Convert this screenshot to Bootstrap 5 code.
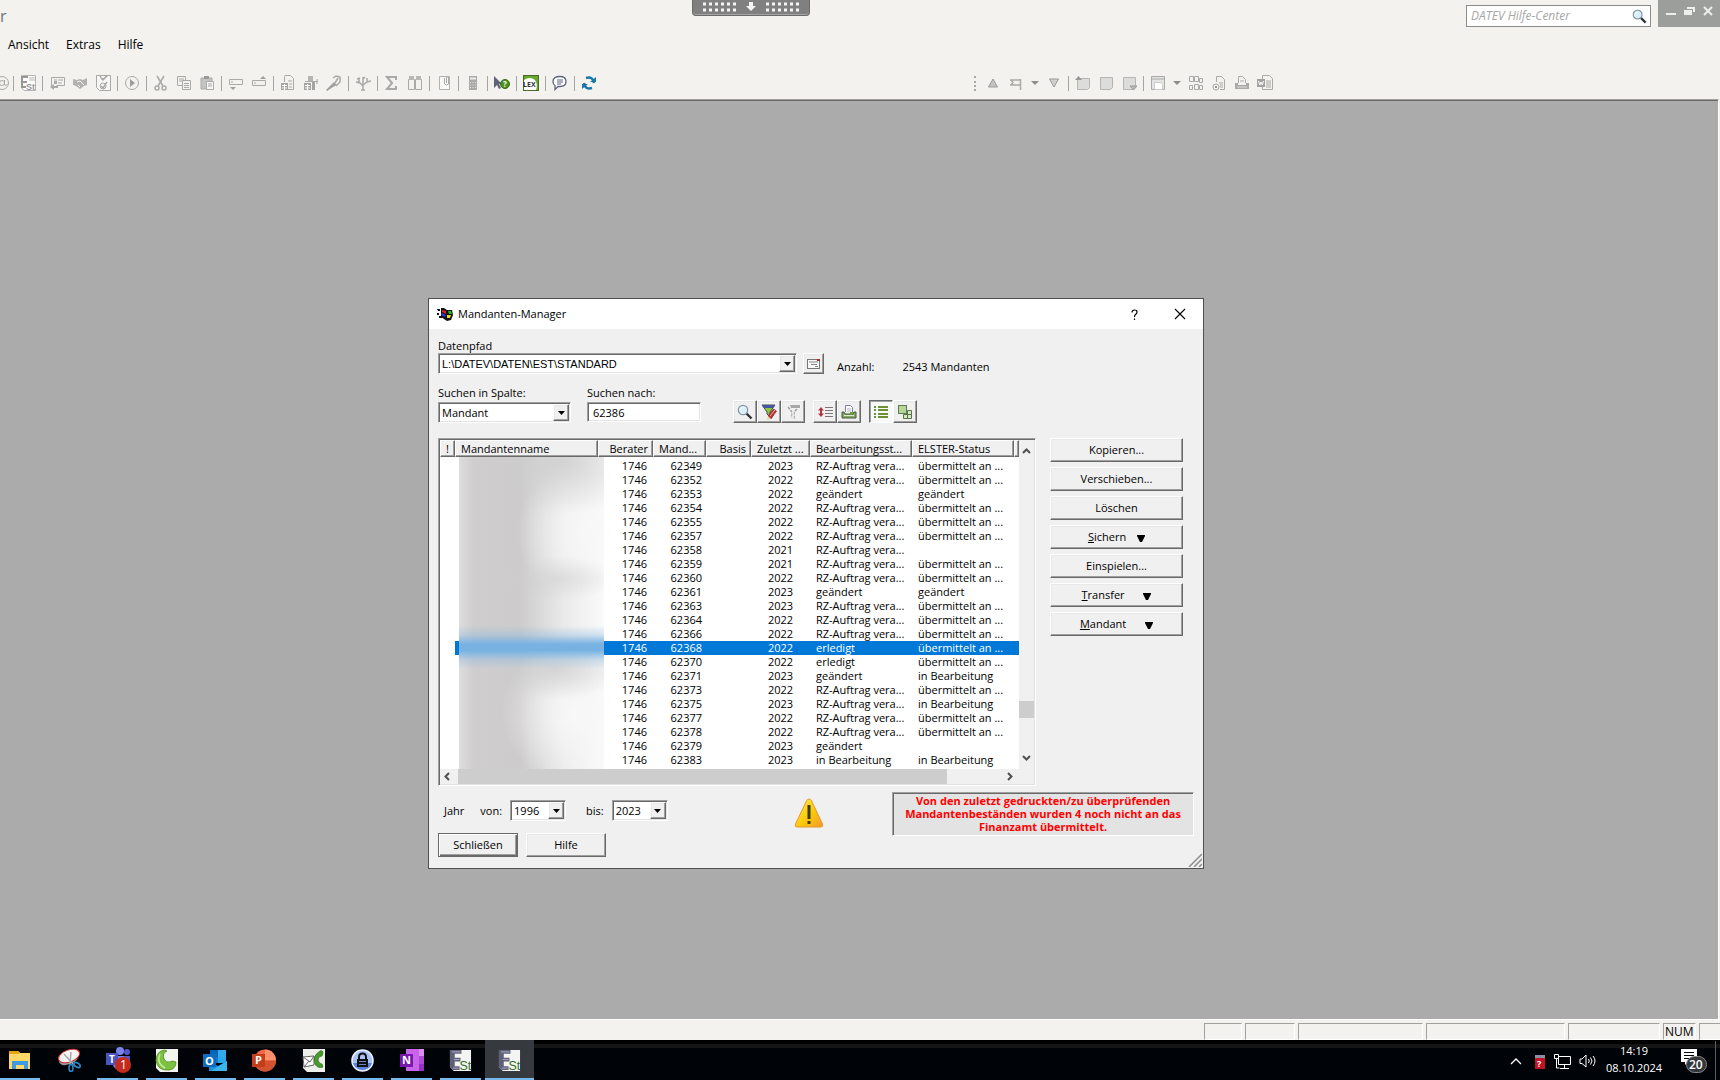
<!DOCTYPE html>
<html lang="de">
<head>
  <meta charset="UTF-8" />
  <meta name="viewport" content="width=device-width, initial-scale=1" />
  <title>Mandanten-Manager</title>
  <!-- Bootstrap CSS -->
  <link
    href="https://cdn.jsdelivr.net/npm/bootstrap@5.3.0/dist/css/bootstrap.min.css"
    rel="stylesheet"
  />
  <style>
    body {
      font-family: "Open Sans", "Noto Sans", sans-serif;
      font-size: 11px;
      line-height: 14px;
      color: #000;
      background: #f3f2ee;
    }
    svg { display: block; flex: none; }

    /* Kopfbereich */
    .titlerow { height: 27px; }
    .apptitle { font-size: 16px; line-height: 20px; color: #6c7480; padding-top: 6px; }
    .helpsearch {
      width: 185px;
      height: 22px;
      margin: 5px 7px 0 0;
      border: 1px solid #8c8c8c;
      background: #fff;
      padding: 0 3px 0 4px;
    }
    .helpsearch input { font-size: 12px; font-style: italic; min-width: 0; background: none; }
    .helpsearch input::placeholder { color: #a6a6a6; opacity: 1; }
    .plainbtn { border: 0; background: none; padding: 0; color: inherit; }
    .mdibtns { width: 62px; background: #9c9e9c; padding: 6px 7px 0 8px; }
    .menurow { height: 36px; padding-left: 8px; }
    .menurow a { color: #000; font-size: 12px; line-height: 16px; text-decoration: none; margin-right: 17px; }
    .toolrow { height: 36px; padding-top: 4px; }
    .tool { width: 23px; height: 20px; border: 0; padding: 0; background: none; display: flex; align-items: center; justify-content: center; flex: none; }
    .tool.cut { width: 10px; justify-content: flex-end; }
    .tool.narrow { width: 15px; }
    .toolsep { width: 6px; flex: none; }
    .toolsep::before { content: ""; display: block; width: 1px; height: 15px; margin-left: 3px; background: #a5a5a3; }
    .tools2 { margin-left: 371px; }
    .grip { border-left: 2px dotted #a8a8a8; height: 15px; margin: 0 5px 0 3px; }
    .sessionbar { left: 692px; top: 0; width: 118px; height: 16px; background: #808080; border: 1px solid #6b6b6b; border-top: 0; border-radius: 0 0 4px 4px; box-shadow: inset 0 -1px #a5a5a5; }

    /* Arbeitsbereich */
    .workarea { background: #ababab; border-top: 1px solid #a0a0a0; border-right: 1px solid #fff; margin-right: 1px; box-shadow: inset 0 1px #696969; }
    .statusrow { height: 21px; border-top: 1px solid #fff; padding-top: 3px; gap: 3px; }
    .pane { border: 1px solid #fff; border-top-color: #a0a0a0; border-left-color: #a0a0a0; font-size: 12px; line-height: 16px; padding-left: 1px; }

    /* Dialog */
    .dialogwin { left: 428px; top: 198px; width: 776px; background: #f0f0f0; border: 1px solid #505050; }
    .dialogtitle { height: 30px; background: #fff; padding: 0 17px 0 8px; }
    .dialogtitle span { padding-left: 5px; }
    .helpbtn { margin-right: 36px; }
    .dialogbody { padding: 10px 9px 11px 9px; }
    .raised, .raised:hover, .raised:active {
      border: 1px solid;
      border-color: #fff #696969 #696969 #fff;
      box-shadow: inset -1px -1px #a0a0a0, inset 1px 1px #e8e8e8;
      background: #f0f0f0;
      border-radius: 0;
      color: #000;
      font-size: 11px;
      line-height: 14px;
      padding: 0;
    }
    .sunken {
      border: 1px solid;
      border-color: #a0a0a0 #fff #fff #a0a0a0;
      box-shadow: inset 1px 1px #696969, inset -1px -1px #e3e3e3;
      background: #fff;
    }
    .combo { position: relative; height: 21px; }
    .combo select { appearance: none; width: 100%; height: 100%; border: 0; background: none; padding: 0 20px 0 3px; color: #000; }
    .combo .arrow { position: absolute; right: 1px; top: 1px; bottom: 1px; width: 16px; pointer-events: none; display: flex; align-items: center; justify-content: center; }
    .pathbox { width: 359px; font-family: "Liberation Sans", Arial, sans-serif; }
    .colbox { width: 133px; }
    .yearbox { width: 56px; }
    .searchbox { width: 114px; height: 20px; margin-bottom: 1px; padding: 0 5px; color: #000; }
    .fieldrow { margin-top: 12px; }
    .fieldrow label { margin-bottom: 2px; }
    .iconbtn { width: 24px; height: 23px; display: flex; align-items: center; justify-content: center; }
    .pathbtn { width: 21px; height: 21px; margin-left: 6px; }
    .countinfo { padding-left: 13px; gap: 28px; }
    .iconbtn.pressed { border-color: #696969 #fff #fff #696969; box-shadow: inset 1px 1px #a0a0a0; background: #f8f8f8; }
    .listrow { margin-top: 15px; gap: 14px; }
    .listbox { flex: 1; min-width: 0; padding: 1px; height: 348px; }
    .clients { table-layout: fixed; width: 100%; border-collapse: separate; border-spacing: 0; }
    .clients th {
      height: 17px;
      font-weight: 400;
      background: #f0f0f0;
      border: solid;
      border-width: 1px;
      border-color: #fff #696969 #696969 #fff;
      box-shadow: inset -1px -1px #a0a0a0;
      padding: 0 4px 0 5px;
      white-space: nowrap;
      overflow: hidden;
    }
    .clients td { height: 14px; line-height: 14px; padding: 0 6px; white-space: nowrap; overflow: hidden; }
    .clients td:nth-child(4) { padding-right: 4px; }
    .clients tbody::before { content: ""; display: block; height: 2px; }
    .clients tr.selected td:not(:first-child) { background: #0078d7; color: #fff; }
    .namemask {
      left: 19px;
      top: 17px;
      width: 145px;
      bottom: 0;
      background:
        linear-gradient(180deg, transparent 54%, rgba(130, 182, 225, .35) 57%, #78b2e2 60%, #78b2e2 62%, rgba(130, 182, 225, .35) 65%, transparent 68%),
        radial-gradient(ellipse 90px 50px at 70% 2%, rgba(205, 205, 205, .8), transparent),
        radial-gradient(ellipse 60px 22px at 68% 39%, rgba(208, 208, 208, .6), transparent),
        radial-gradient(ellipse 70px 30px at 66% 68%, rgba(206, 206, 206, .8), transparent),
        radial-gradient(ellipse 70px 70px at 88% 24%, rgba(248, 248, 248, .9), transparent),
        radial-gradient(ellipse 74px 70px at 80% 82%, rgba(248, 248, 248, 1), transparent),
        linear-gradient(90deg, #dedddd 0, #cfcdce 10%, #cdcbcc 42%, #eaeaea 72%, #fafafa 100%);
    }
    .vbar { width: 15px; flex: none; background: #f0f0f0; }
    .hbar { height: 15px; flex: none; background: #f0f0f0; }
    .hbar .right { margin-right: 21px; }
    .thumb { background: #cdcdcd; }
    .sidebtns { width: 133px; gap: 5px; margin-right: 11px; }
    .sidebtns .btn { height: 24px; }
    .bottomrow { margin-top: 6px; }
    .yearrow { padding-left: 6px; }
    .warnsign { padding: 6px 0 0 34px; }
    .msgbox { width: 302px; height: 44px; background: #e3e3e3; color: #f00; font-weight: 700; line-height: 13px; padding: 1px 8px; text-align: center; }
    .dlgbtn { width: 80px; height: 24px; }
    .dlgbtn.default { border-color: #696969; box-shadow: inset 1px 1px #fff, inset -1px -1px #696969, inset -2px -2px #a0a0a0; }
    .sizegrip { right: 1px; bottom: 1px; }

    /* Taskleiste */
    .taskbar { height: 40px; background: #000308; border-top: 4px solid #000; box-shadow: inset 0 4px #151515; color: #fff; }
    .tasks { margin-left: -5px; }
    .task { width: 49px; height: 40px; margin-top: -4px; border: 0; background: none; position: relative; display: flex; align-items: center; justify-content: center; padding: 0; }
    .task.open::after { content: ""; position: absolute; left: 4px; right: 4px; bottom: 0; height: 2px; background: #76b9ed; }
    .task.active { background: #363a3f; }
    .task.active::after { left: 0; right: 0; }
    .tray { height: 34px; }
    .clock { width: 66px; line-height: 17px; text-align: center; margin: 0 13px 4px 5px; }
    .peek { border-left: 1px solid #5a5c60; width: 5px; height: 40px; margin-left: 8px; }
  </style>
</head>
<body>
  <!-- gemeinsame Symbole -->
  <svg class="d-none">
    <symbol id="tri" viewBox="0 0 7 4"><path d="M0 0h7L3.500 4z" fill="currentColor" /></symbol>
    <symbol id="lens" viewBox="0 0 16 16">
      <path d="M9.500 9.500l5 5" stroke="#333" stroke-width="2.400" />
      <circle cx="6" cy="6" r="4.700" fill="#d9effa" stroke="#8395a0" stroke-width="1.200" />
      <path d="M3.500 6a3 3 0 0 1 2.500-2.600" stroke="#fff" stroke-width="1.200" fill="none" />
    </symbol>
    <symbol id="est" viewBox="0 0 24 24">
      <path d="M1 1h22v22H5l-4-4z" fill="#f4f4f2" />
      <path d="M1 1h12v4H6v4h6v4H6v5h5v4H4l-3-3z" fill="#5d6078" />
      <path d="M3 3h9M5 11h6M4 20h6" stroke="#a9acc0" />
      <text x="11" y="22" font-family="Liberation Sans" font-size="13" fill="#2f6b2c">St</text>
    </symbol>
  </svg>

  <div class="vh-100 d-flex flex-column overflow-hidden position-relative">
    <header>
      <div class="titlerow d-flex">
        <div class="apptitle me-auto">r</div>
        <div class="helpsearch d-flex align-items-center">
          <input class="form-control border-0 rounded-0 shadow-none p-0" type="text" placeholder="DATEV Hilfe-Center" aria-label="DATEV Hilfe-Center" />
          <button class="plainbtn" type="button" aria-label="Suchen"><svg width="15" height="15"><use href="#lens" /></svg></button>
        </div>
        <div class="mdibtns d-flex justify-content-between align-items-start text-white">
          <button class="plainbtn" type="button" aria-label="Minimieren"><svg width="10" height="10"><path d="M0 8h10" stroke="#eee" stroke-width="2" /></svg></button>
          <button class="plainbtn" type="button" aria-label="Wiederherstellen"><svg width="11" height="10"><path d="M3 1h8v5H9V3H3z" fill="#eee" /><path d="M0 4h8v5H0z" fill="#eee" /></svg></button>
          <button class="plainbtn" type="button" aria-label="Schließen"><svg width="10" height="10"><path d="M1 1l8 8M9 1L1 9" stroke="#eee" stroke-width="2" /></svg></button>
        </div>
      </div>
      <nav class="menurow d-flex align-items-center">
        <a href="#">Ansicht</a>
        <a href="#">Extras</a>
        <a href="#">Hilfe</a>
      </nav>
      <div class="toolrow d-flex align-items-center" id="toolrow"></div>
    </header>

    <div class="sessionbar position-absolute d-flex justify-content-center">
      <svg width="98" height="12">
        <g stroke="#f4f4f4" stroke-width="3" stroke-dasharray="3 3">
          <path d="M1 4h33M1 10h33M64 4h33M64 10h33" />
        </g>
        <path d="M47 2h4v4h3l-5 5-5-5h3z" fill="#f4f4f4" />
      </svg>
    </div>

    <main class="workarea flex-grow-1 position-relative">
      <section class="dialogwin position-absolute">
        <div class="dialogtitle d-flex align-items-center">
          <svg width="16" height="14" viewBox="0 0 16 14">
            <path d="M0 2h3v2H1zM0 6h2v2H0zM2 9h3v2H2zM4 1h3l3 2 5 0 1 5-2 5-4 1-6-4z" fill="#111" />
            <path d="M5 3l4 1v3L5 5z" fill="#e02020" /><path d="M11 4h3l1 3h-3z" fill="#24b324" />
            <path d="M5 6l4 2-1 2-4-2z" fill="#2838e0" /><path d="M10 8h4l-1 3h-3z" fill="#f0d820" />
          </svg>
          <span class="me-auto">Mandanten-Manager</span>
          <button class="plainbtn helpbtn" type="button" aria-label="Hilfe"><svg width="7" height="11"><path d="M1 3.500Q1 1 3.500 1T6 3Q6 4.500 4.500 5.500 3.500 6.200 3.500 8M3.500 9.500V11" fill="none" stroke="#000" stroke-width="1.200" /></svg></button>
          <button class="plainbtn" type="button" aria-label="Schließen"><svg width="12" height="12"><path d="M1 1l10 10M11 1L1 11" stroke="#000" stroke-width="1.100" /></svg></button>
        </div>

        <div class="dialogbody">
          <div class="d-flex align-items-end">
            <div>
              <label class="d-block" for="path">Datenpfad</label>
              <div class="combo sunken pathbox">
                <select id="path"><option>L:\DATEV\DATEN\EST\STANDARD</option></select>
                <span class="arrow raised"><svg width="7" height="4"><use href="#tri" /></svg></span>
              </div>
            </div>
            <button class="btn raised iconbtn pathbtn" type="button" aria-label="Pfad wählen">
              <svg width="14" height="12"><rect x=".5" y="1.500" width="12" height="9" fill="#f8f8f8" stroke="#777" /><path d="M2 4h9M4 6.500h6M8 8.500h3" stroke="#888" /><path d="M10 1h3v2h-3z" fill="#b22" /></svg>
            </button>
            <div class="countinfo d-flex">
              <span>Anzahl:</span>
              <span>2543 Mandanten</span>
            </div>
          </div>

          <div class="fieldrow d-flex align-items-end">
            <div>
              <label class="d-block" for="column">Suchen in Spalte:</label>
              <div class="combo sunken colbox">
                <select id="column"><option>Mandant</option></select>
                <span class="arrow raised"><svg width="7" height="4"><use href="#tri" /></svg></span>
              </div>
            </div>
            <div class="ms-3 me-4">
              <label class="d-block" for="term">Suchen nach:</label>
              <input class="sunken searchbox d-block" id="term" type="text" value="62386" />
            </div>
            <div class="d-flex ms-2">
              <button class="btn raised iconbtn" type="button" aria-label="Suchen"><svg width="16" height="16"><use href="#lens" /></svg></button>
              <button class="btn raised iconbtn" type="button" aria-label="Filter bearbeiten">
                <svg width="16" height="16"><path d="M1 1h13L9 8v5l-3-3V8z" fill="#8ec63f" stroke="#44544a" /><path d="M1 1h13l-2 3H3z" fill="#4456a0" /><path d="M7 12l5.500-7 3 2-5.500 8z" fill="#c03038" stroke="#7a1a20" stroke-width=".6" /><path d="M9 12l5-6" stroke="#f0a8a8" /><path d="M7 12l-1 4 4-1z" fill="#e8d8a0" /></svg>
              </button>
              <button class="btn raised iconbtn" type="button" aria-label="Filter aufheben">
                <svg width="16" height="16"><path d="M5 1h10v3H6z" fill="#a8a8a8" /><path d="M3 3l4 5v6M12 5L9 8v7" stroke="#a0a0a0" stroke-width="1.500" stroke-dasharray="3 1" fill="none" /><path d="M8 7v8" stroke="#fff" /></svg>
              </button>
            </div>
            <div class="d-flex ms-2">
              <button class="btn raised iconbtn" type="button" aria-label="Sortieren">
                <svg width="16" height="14"><path d="M4 3v8" stroke="#b03840" stroke-width="2" /><path d="M1 5.500L4 2l3 3.500zM1 8.500L4 12l3-3.500z" fill="#b03840" /><path d="M8 2.500h8M8 5.500h8M8 8.500h8M8 11.500h8" stroke="#777" /></svg>
              </button>
              <button class="btn raised iconbtn" type="button" aria-label="Drucken">
                <svg width="16" height="16"><path d="M4.500 8V1.500h5l2 2V8" fill="#fff" stroke="#7a83a0" /><path d="M6 5h4M6 7h4" stroke="#a9b0c4" /><path d="M1 8h2l1 2h8l1-2h2v6H1z" fill="#86a868" stroke="#44583a" /><path d="M3 11.500h10" stroke="#dcebc8" /><path d="M9 9h3" stroke="#6a2" stroke-width="2" /></svg>
              </button>
            </div>
            <div class="d-flex ms-2">
              <button class="btn raised iconbtn pressed" type="button" aria-label="Liste">
                <svg width="16" height="14"><path d="M1 2h2M1 5h2M1 9h2M1 12h2M5 2h10M5 5h10M5 9h10M5 12h10" stroke="#6f8f35" stroke-width="1.800" /></svg>
              </button>
              <button class="btn raised iconbtn" type="button" aria-label="Symbole">
                <svg width="16" height="16"><rect x="1.500" y="1.500" width="8" height="8" fill="#b6d69a" stroke="#5f7d50" /><path d="M10.500 6.500h4v4h-4zM6.500 10.500h4v4h-4zM10.500 10.500h4v4h-4z" fill="#d5e8c4" stroke="#587548" /></svg>
              </button>
            </div>
          </div>

          <div class="listrow d-flex">
            <div class="listbox sunken d-flex flex-column">
              <div class="d-flex flex-grow-1 overflow-hidden">
                <div class="flex-grow-1 position-relative overflow-hidden">
                  <table class="clients">
                    <colgroup>
                      <col style="width: 15px" /><col style="width: 143px" /><col style="width: 55px" />
                      <col style="width: 53px" /><col style="width: 45px" /><col style="width: 59px" />
                      <col style="width: 102px" /><col style="width: 102px" /><col />
                    </colgroup>
                    <thead>
                      <tr>
                        <th>!</th>
                        <th>Mandantenname</th>
                        <th class="text-end">Berater</th>
                        <th>Mand...</th>
                        <th class="text-end">Basis</th>
                        <th>Zuletzt ...</th>
                        <th>Bearbeitungsst...</th>
                        <th>ELSTER-Status</th>
                        <th class="px-0"></th>
                      </tr>
                    </thead>
                    <tbody id="rows"></tbody>
                  </table>
                  <div class="namemask position-absolute"></div>
                </div>
                <div class="vbar d-flex flex-column align-items-center py-1">
                  <svg class="mt-1" width="9" height="6"><path d="M1 5l3.500-3.500L8 5" fill="none" stroke="#505050" stroke-width="2" /></svg>
                  <div class="flex-grow-1"></div>
                  <div class="thumb w-100" style="height: 17px"></div>
                  <div style="height: 37px"></div>
                  <svg class="mb-1" width="9" height="6"><path d="M1 1l3.500 3.500L8 1" fill="none" stroke="#505050" stroke-width="2" /></svg>
                </div>
              </div>
              <div class="hbar d-flex align-items-center">
                <svg class="ms-1 me-2" width="6" height="9"><path d="M5 1L1.500 4.500 5 8" fill="none" stroke="#505050" stroke-width="2" /></svg>
                <div class="thumb h-100" style="width: 489px"></div>
                <svg class="right ms-auto" width="6" height="9"><path d="M1 1l3.500 3.500L1 8" fill="none" stroke="#505050" stroke-width="2" /></svg>
              </div>
            </div>
            <div class="sidebtns d-flex flex-column">
              <button class="btn raised" type="button">Kopieren...</button>
              <button class="btn raised" type="button">Verschieben...</button>
              <button class="btn raised" type="button">Löschen</button>
              <button class="btn raised" type="button"><u>S</u>ichern <svg class="d-inline ms-2" width="8" height="7"><path d="M0 0h8v1L5 7H3L0 1z" /></svg></button>
              <button class="btn raised" type="button">Einspielen...</button>
              <button class="btn raised" type="button"><u>T</u>ransfer <svg class="d-inline ms-3" width="8" height="7"><path d="M0 0h8v1L5 7H3L0 1z" /></svg></button>
              <button class="btn raised" type="button"><u>M</u>andant <svg class="d-inline ms-3" width="8" height="7"><path d="M0 0h8v1L5 7H3L0 1z" /></svg></button>
            </div>
          </div>

          <div class="bottomrow d-flex">
            <div class="pt-2">
              <div class="yearrow d-flex align-items-center">
                <span class="me-3">Jahr</span>
                <label class="me-1 pe-1" for="from">von:</label>
                <div class="combo sunken yearbox">
                  <select id="from"><option>1996</option></select>
                  <span class="arrow raised"><svg width="7" height="4"><use href="#tri" /></svg></span>
                </div>
                <label class="ms-3 me-2 ps-1" for="to">bis:</label>
                <div class="combo sunken yearbox">
                  <select id="to"><option>2023</option></select>
                  <span class="arrow raised"><svg width="7" height="4"><use href="#tri" /></svg></span>
                </div>
              </div>
              <div class="d-flex gap-2 mt-2 pt-1">
                <button class="btn raised dlgbtn default" type="button">Schließen</button>
                <button class="btn raised dlgbtn" type="button">Hilfe</button>
              </div>
            </div>
            <div class="warnsign flex-grow-1 d-flex justify-content-center">
              <svg class="ms-4" width="30" height="30" viewBox="0 0 30 30">
                <defs><linearGradient id="warn" x2="1" y2="1"><stop offset="0" stop-color="#fff04a" /><stop offset=".55" stop-color="#fbc90c" /><stop offset="1" stop-color="#f09a2c" /></linearGradient></defs>
                <path d="M15 1q1.500 0 2.300 1.500L28.500 26q.8 3-1.500 3H3q-2.300 0-1.500-3L12.700 2.500Q13.500 1 15 1z" fill="url(#warn)" stroke="#e8962a" />
                <path d="M13.500 7h3v14h-3zM13.500 23h3v3h-3z" fill="#3f3a16" />
              </svg>
            </div>
            <div class="msgbox sunken">Von den zuletzt gedruckten/zu überprüfenden Mandantenbeständen wurden 4 noch nicht an das Finanzamt übermittelt.</div>
          </div>
        </div>
        <svg class="sizegrip position-absolute" width="14" height="14"><path d="M1 14L14 1M6 14l8-8M11 14l3-3" stroke="#8c8c8c" stroke-width="1.500" /></svg>
      </section>
    </main>

    <div class="statusrow d-flex justify-content-end">
      <div class="pane" style="width: 38px"></div>
      <div class="pane" style="width: 50px"></div>
      <div class="pane" style="width: 125px"></div>
      <div class="pane" style="width: 139px"></div>
      <div class="pane" style="width: 92px"></div>
      <div class="pane" style="width: 33px">NUM</div>
      <div class="pane border-end-0" style="width: 21px"></div>
    </div>

    <footer class="taskbar d-flex">
      <div class="tasks d-flex">
        <button class="task open" type="button" aria-label="Explorer">
          <svg width="22" height="22" viewBox="0 0 22 22"><path d="M0 2h9l2 2h10v16H0z" fill="#ffd766" /><path d="M0 2h9l2 2-2 1H0z" fill="#e5a50f" /><path d="M3 20v-8h16v8h-4v-4H7v4z" fill="#3f9be0" /></svg>
        </button>
        <button class="task" type="button" aria-label="Snipping Tool">
          <svg width="24" height="24" viewBox="0 0 24 24"><path d="M2 14Q2 5 13 2q9-2 9 3 0 8-9 11-9 3-11-2z" fill="#999" /><ellipse cx="12" cy="8" rx="11" ry="6" transform="rotate(-20 12 8)" fill="#f7f4f4" stroke="#d03030" /><path d="M7 6l11 12M14 4l-1 12" stroke="#a8a8b0" stroke-width="1.500" /><ellipse cx="14" cy="20" rx="2" ry="3.500" fill="none" stroke="#2b87c8" stroke-width="1.600" /><ellipse cx="20" cy="17" rx="3.500" ry="2" transform="rotate(30 20 17)" fill="none" stroke="#2b87c8" stroke-width="1.600" /></svg>
        </button>
        <button class="task open" type="button" aria-label="Teams">
          <svg width="26" height="26" viewBox="0 0 26 26"><circle cx="15" cy="4" r="4" fill="#7b83eb" /><circle cx="22" cy="5" r="3" fill="#5059c9" /><path d="M8 9h13v9q-2 6-7 5-5-1-6-5z" fill="#7b83eb" /><path d="M19 9h6v8h-6z" fill="#5059c9" /><rect x="1" y="6" width="12" height="12" fill="#4b53bc" /><text x="4" y="16" font-family="Open Sans" font-size="10" font-weight="700" fill="#fff">T</text><circle cx="18" cy="18" r="8" fill="#c42b1c" /><text x="15" y="22" font-family="Open Sans" font-size="12" fill="#fff">1</text></svg>
        </button>
        <button class="task open" type="button" aria-label="Telefonie">
          <svg width="23" height="23" viewBox="0 0 23 23"><path d="M1 0h22v23H5l-4-4z" fill="#f3f3ef" /><path d="M6 2q4-2 6 0-5 2-3 8 2 4 6 3 1-2 6 0 0 7-7 8Q3 22 1 12 1 5 6 2z" fill="#7cc142" stroke="#4b8a1c" stroke-width=".8" /><path d="M5 5q-4 9 5 14" stroke="#c5eb9b" fill="none" stroke-width="1.500" /></svg>
        </button>
        <button class="task open" type="button" aria-label="Outlook">
          <svg width="25" height="23" viewBox="0 0 25 23"><path d="M7 1h16v13H7z" fill="#28a8ea" /><path d="M7 1h8v7H7z" fill="#0364b8" /><path d="M15 1h8v7h-8z" fill="#32a9e8" /><path d="M7 8h8v6H7z" fill="#0f78d4" /><path d="M6 12l9 5 9-5v10H6z" fill="#1a8fe0" /><path d="M24 12v10H8z" fill="#50d0f5" opacity=".6" /><rect y="5" width="13" height="13" fill="#0f6cbd" /><text x="2" y="16" font-family="Open Sans" font-size="11" font-weight="700" fill="#fff">O</text></svg>
        </button>
        <button class="task open" type="button" aria-label="PowerPoint">
          <svg width="25" height="23" viewBox="0 0 25 23"><circle cx="13" cy="11.500" r="11" fill="#ed6c47" /><path d="M13 .5a11 11 0 0 1 11 11H13z" fill="#ff8f6b" /><path d="M3 16a11 11 0 0 0 21-4.500H13z" fill="#d35230" /><rect y="5" width="13" height="13" fill="#c43e1c" /><text x="3" y="15" font-family="Open Sans" font-size="11" font-weight="700" fill="#fff">P</text></svg>
        </button>
        <button class="task open" type="button" aria-label="Kontakte">
          <svg width="23" height="23" viewBox="0 0 23 23"><path d="M1 0h22v23H5l-4-4z" fill="#eeeeea" /><path d="M1 8l11-1v9L2 18z" fill="#fff" stroke="#666" /><path d="M1 8l7 5 4-6M2 18l5-6" stroke="#666" fill="none" /><path d="M18 2q2-1 3 1l-1 4q-4 0-4 4 1 4 4 4l1 3q-5 2-8-3-3-8 5-13z" fill="#459c2c" stroke="#2d6b1c" stroke-width=".7" /></svg>
        </button>
        <button class="task open" type="button" aria-label="Passwörter">
          <svg width="23" height="23" viewBox="0 0 23 23"><circle cx="11.500" cy="11.500" r="10.500" fill="#a9c1f5" stroke="#e6eeff" stroke-width="1.600" /><path d="M2 14a10 10 0 0 0 19 0z" fill="#5f83dc" /><path d="M8 11V8q0-3.500 3.500-3.500T15 8v3" fill="none" stroke="#111" stroke-width="2" /><rect x="6" y="10" width="11" height="8" fill="#111" /><path d="M8 12.500h7M8 15.500h7" stroke="#6d86c0" /></svg>
        </button>
        <button class="task open" type="button" aria-label="OneNote">
          <svg width="24" height="22" viewBox="0 0 24 22"><rect x="6" width="18" height="22" fill="#ca64ea" /><path d="M19 0h5v7h-5z" fill="#e08cf5" /><path d="M19 7h5v8h-5z" fill="#ae4bd5" /><path d="M19 15h5v7h-5z" fill="#9332bf" /><rect y="5" width="13" height="13" fill="#7719aa" /><text x="2" y="15" font-family="Open Sans" font-size="11" font-weight="700" fill="#fff">N</text></svg>
        </button>
        <button class="task open" type="button" aria-label="Einkommensteuer"><svg width="23" height="23"><use href="#est" /></svg></button>
        <button class="task open active" type="button" aria-label="Mandanten-Manager"><svg width="23" height="23"><use href="#est" /></svg></button>
      </div>

      <div class="tray d-flex align-items-center ms-auto">
        <svg class="me-2" width="12" height="7"><path d="M1 6l5-5 5 5" fill="none" stroke="#fff" stroke-width="1.300" /></svg>
        <svg class="ms-1 me-2" width="12" height="15"><path d="M1 1h10v4H1z" fill="#8c90a4" /><path d="M1 4h10v11H1z" fill="#c41224" /><text x="3" y="13" font-family="Open Sans" font-size="9" font-weight="700" fill="#fff">?</text></svg>
        <svg width="17" height="15" class="me-2"><path d="M4.500 2.500h12v8h-12zM10.500 11v3M6 14.500h9M2.500 5v9h3" fill="none" stroke="#fff" /><path d="M.5 .5h4v4h-4z" fill="#000308" stroke="#fff" /></svg>
        <svg width="17" height="14"><path d="M1 5h2l4-4v12L3 9.500H1z" fill="none" stroke="#fff" /><path d="M9.500 5q1.500 2 0 4M11.500 3.500q3 3.500 0 7M14 2q4 5 0 10" fill="none" stroke="#fff" /></svg>
        <div class="clock"><div>14:19</div><div>08.10.2024</div></div>
        <svg width="27" height="26" viewBox="0 0 27 26"><path d="M1 1h16v13H8l-3 3v-3H1z" fill="#fff" /><path d="M4 4.500h10M4 7.500h10M4 10.500h6" stroke="#000308" /><rect x="6.500" y="8.500" width="20" height="16" rx="8" fill="#33363c" stroke="#8a8a8a" /><text x="9" y="21" font-family="Open Sans" font-size="12" font-weight="600" fill="#fff">20</text></svg>
        <div class="peek"></div>
      </div>
    </footer>
  </div>

  <!-- JavaScript -->
  <script>
    // Symbolleiste: "|" = Trennstrich, sonst [Titel, SVG-Inhalt]
    const g = 'fill="none" stroke="#a9a9a7"';
    const tools = [
      ["E-Mail", `<g ${g}><circle cx="8" cy="8" r="6.500"/><circle cx="8" cy="8" r="2.500"/><path d="M10.500 5v5q2 1 3-1"/></g>`],
      "|",
      ["ESt", `<path d="M1.500 .5h14v15H4l-2.500-3z" fill="#fff" stroke="#b5b5b3"/><path d="M8 2H2v10h4M2 7h5" fill="none" stroke="#979795" stroke-width="2"/><path d="M9 3h6M9 5h6" stroke="#b5b5b3"/><text x="6" y="15" font-family="Liberation Sans" font-size="9" font-weight="700" fill="#979795">St</text>`],
      "|",
      ["Bescheid", `<g ${g}><path d="M2.500 12V2.500h13v8h-8"/><path d="M5 5h3M9 5h5M9 8h4"/></g><path d="M5 6h3v3H5zM1 12l4-3v2h4v2H5v2z" fill="#aaa"/>`],
      ["Partner", `<path d="M1 4l4 1 3-1 3 1 4-2v7l-3 1-4 3-4-3-3-1z" fill="#b2b2b0"/><path d="M5 7l3-1 4 4M6 10l2 2" stroke="#f3f2ee" fill="none"/>`],
      ["Prüfen", `<path d="M1.500 .5h14v15h-11l-3-3z" fill="#f8f8f6" stroke="#a9a9a7"/><circle cx="8" cy="11" r="3" ${g}/><path d="M5 1q3 6 6 0M6 3l2 2 5-5M6 11l2 2 4-6" ${g} stroke-width="1.500"/>`],
      "|",
      ["Start", `<circle cx="8" cy="8" r="6.500" ${g}/><path d="M6 4l5 4-5 4z" fill="#9d9d9b"/>`],
      "|",
      ["Ausschneiden", `<g ${g} stroke-width="1.500"><path d="M4 1l6 10M11 1L5 11"/><circle cx="4" cy="13" r="2"/><circle cx="11" cy="13" r="2"/></g>`],
      ["Kopieren", `<g ${g}><path d="M1.500 1.500h8v9h-8zM3 4h5M3 6h5" /><path d="M6.500 5.500h8v9h-8z" fill="#f3f2ee"/><path d="M8 8.500h5M8 10.500h5M8 12.500h5"/></g>`],
      ["Einfügen", `<path d="M2 3h11v11H2z" fill="#c4c4c2" stroke="#a9a9a7"/><path d="M5 1h5v3H5z" fill="#999"/><path d="M7.500 6.500h7v8h-7z" fill="#f6f6f4" stroke="#aaa"/><path d="M9 9h4M9 11h4" ${g}/>`],
      "|",
      ["Zeile einfügen", `<path d="M1.500 4.500h13v5h-13zM4 6v2" ${g}/><path d="M2 12h6l-3 3z" fill="#a0a09e"/>`],
      ["Zeile löschen", `<path d="M1.500 5.500h13v5h-13zM4 7v2" ${g}/><path d="M9 4h6l-3-3z" fill="#a0a09e"/>`],
      "|",
      ["Rechnen", `<path d="M4.500 .5h6l3 3v11h-6M4.500 1.500V7M8 6h4M9 9h3M9 12h3" ${g}/><path d="M1 8h7v7H1z" fill="#a3a3a1"/><path d="M2 10.500h5M2 13h5M4.500 9v6" stroke="#fff"/>`],
      ["Vergleich", `<path d="M5 1h5v5H5z" fill="#b5b5b3"/><path d="M1 8h7v7H1zM9 7h3v8H9z" fill="#a3a3a1"/><path d="M2 10.500h5M2 13h5M4.500 9v6" stroke="#fff"/><path d="M2 6.500h13M14 4v5" ${g}/>`],
      ["Assistent", `<path d="M0 15l8-8 3 3-4 2-6 4z" fill="#a0a09e"/><path d="M7 3l3-2 4 1v5l-4 4M9 8l3-5" ${g} stroke-width="1.500"/>`],
      "|",
      ["Baum", `<path d="M8 15V8M6 15h4M8 11L3 6M8 10l5-4M5 8L1 7M4 7V3M8 8V2M12 6V3M12 7l4-1M5 3L2 4M10 2L8 4" ${g} stroke-width="1.500"/>`],
      "|",
      ["Summe", `<path d="M12 5V2H3l5 6-5 6h9v-3" ${g} stroke-width="2"/>`],
      ["Bücher", `<path d="M1.500 4.500h6v10h-6zM8.500 4.500h6v10h-6z" fill="#f3f2ee" stroke="#a9a9a7"/><path d="M2 1h5v4H2zM9 1h5v4H9z" fill="#b8b8b6"/>`],
      "|",
      ["Anlage", `<path d="M3.500 1.500h10v13h-10z" fill="#fafaf8" stroke="#b2b2b0"/><path d="M8.500 3v6q2 2 4 0V2h-2v6" ${g}/>`],
      "|",
      ["Taschenrechner", `<path d="M4 1h8v14H4z" fill="#a9a9a7"/><path d="M5 3.500h6" stroke="#eee" stroke-width="2"/><path d="M5 7.500h6M5 10h6M5 12.500h6" stroke="#e4e4e2" stroke-dasharray="1 1.500"/>`],
      "|",
      ["Direkthilfe", `<path d="M0 1v12l3-3 2 4 2-1-2-4h3z" fill="#5e6378"/><circle cx="11" cy="9" r="4.500" fill="#4f8f1e" stroke="#3b6b1a"/><text x="9" y="12" font-size="8" font-weight="700" fill="#fff">?</text>`],
      "|",
      ["LEX", `<rect x=".5" y=".5" width="15" height="15" fill="#6aa82a" stroke="#496a2a"/><path d="M1 5q6-4 11 0 3 5 1 10H1z" fill="#fff"/><text x="0" y="12" font-size="7" font-weight="700" fill="#333">LEX</text>`],
      "|",
      ["Feedback", `<path d="M8 1.500q6 0 6 5t-6 5H6l-3 3v-4q-2-1-2-4 0-5 7-5z" fill="#fff" stroke="#5c6280" stroke-width="1.300"/><path d="M5 5h6M5 7h6M5 9h4" stroke="#5c6280"/>`],
      "|",
      ["Aktualisieren", `<path d="M5 3q7-2 8 5M11 13Q4 15 3 8" fill="none" stroke="#1878a8" stroke-width="2.500"/><path d="M9 7h6V2zM7 9H1v5z" fill="#1878a8"/>`]
    ];

    const tools2 = [
      ["Zurück", `<path d="M8 4l4.500 8h-9z" fill="#c4c4c2" stroke="#999"/>`],
      ["Marke", `<path d="M2 5h11M12.500 4v11M2 10h11M3 5l2 2.500L3 10" ${g} stroke-width="1.500"/>`],
      ["", `<path d="M4 6h8l-4 4z" fill="#8d8d8b"/>`, "narrow"],
      ["Weiter", `<path d="M8 12l4.500-8h-9z" fill="#d0d0ce" stroke="#999"/>`],
      "|",
      ["Blatt zurück", `<path d="M2.500 3.500h12v9l-2 2h-10z" fill="#dcdcda" stroke="#b5b5b3"/><path d="M0 5h7L3.500 1z" fill="#999"/>`],
      ["Blatt", `<path d="M2.500 2.500h12v10l-2 2h-10z" fill="#dcdcda" stroke="#b5b5b3"/>`],
      ["Blatt weiter", `<path d="M2.500 2.500h12v10l-2 2h-10z" fill="#dcdcda" stroke="#b5b5b3"/><path d="M9 11h7l-3.500 4z" fill="#bbb" stroke="#999"/>`],
      "|",
      ["Layout", `<path d="M1.500 1.500h13v13h-13z" fill="#e4e4e2" stroke="#a9a9a7"/><path d="M2 4h12" ${g}/><path d="M4.500 7.500h6l2 2v5h-8z" fill="#fff" stroke="#ccc"/>`],
      ["", `<path d="M4 6h8l-4 4z" fill="#8d8d8b"/>`, "narrow"],
      ["Kacheln", `<path d="M1.500 1.500h4v5h-4zM6.500 1.500h4v5h-4zM11.500 3.500h3v4h-3zM1.500 10.500h3v4h-3zM6.500 9.500h4v5h-4zM11.500 10.500h3v4h-3z" ${g}/>`],
      ["Vorschau", `<path d="M5.500 7V1.500h5l3 3v10H9M8 8h4M9 10h3M9 12h3" ${g}/><circle cx="5" cy="12" r="3" ${g}/><path d="M4 11h2v2H4z" fill="#999"/>`],
      ["Drucken", `<path d="M4.500 8V1.500h4l3 3V8M6 6h4" ${g}/><path d="M1 8h3v2h8V8h3v6H1z" fill="#a9a9a7"/><path d="M3 12h10" stroke="#ddd"/>`],
      ["Word", `<path d="M5.500 4V.5h7l3 3v11h-10V12M9 6h5M9 8h5M9 10h5M9 12h5" ${g}/><path d="M0 4h8v8H0z" fill="#a2a2a0"/><path d="M1.500 6l1.200 4L4 7l1.300 3L6.500 6" stroke="#fff" fill="none"/>`]
    ];

    function toolHtml(t, extra = "") {
      if (t === "|") return '<span class="toolsep"></span>';
      return `<button type="button" class="tool ${extra || t[2] || ""}" aria-label="${t[0] || "Auswahl"}">
        <svg width="16" height="16" viewBox="0 0 16 16">${t[1]}</svg></button>`;
    }

    document.getElementById("toolrow").innerHTML =
      tools.map((t, i) => toolHtml(t, i === 0 ? "cut" : "")).join("") +
      '<div class="tools2 d-flex align-items-center"><span class="grip"></span>' +
      tools2.map(t => toolHtml(t)).join("") + "</div>";

    // Mandantenliste
    const rz = "RZ-Auftrag vera...";
    const sent = "übermittelt an ...";
    const edit = "in Bearbeitung";
    const clients = [
      [62349, 2023, rz, sent],
      [62352, 2022, rz, sent],
      [62353, 2022, "geändert", "geändert"],
      [62354, 2022, rz, sent],
      [62355, 2022, rz, sent],
      [62357, 2022, rz, sent],
      [62358, 2021, rz, ""],
      [62359, 2021, rz, sent],
      [62360, 2022, rz, sent],
      [62361, 2023, "geändert", "geändert"],
      [62363, 2023, rz, sent],
      [62364, 2022, rz, sent],
      [62366, 2022, rz, sent],
      [62368, 2022, "erledigt", sent],
      [62370, 2022, "erledigt", sent],
      [62371, 2023, "geändert", edit],
      [62373, 2022, rz, sent],
      [62375, 2023, rz, edit],
      [62377, 2022, rz, sent],
      [62378, 2022, rz, sent],
      [62379, 2023, "geändert", ""],
      [62383, 2023, edit, edit]
    ];

    document.getElementById("rows").innerHTML = clients.map(c => `
      <tr class="${c[0] === 62368 ? "selected" : ""}">
        <td></td><td></td>
        <td class="text-end">1746</td>
        <td class="text-end">${c[0]}</td>
        <td></td>
        <td class="text-center">${c[1]}</td>
        <td>${c[2]}</td>
        <td>${c[3]}</td>
        <td class="px-0"></td>
      </tr>`).join("");
  </script>

  <!-- Bootstrap Bundle JS (include Popper) -->
  <script src="https://cdn.jsdelivr.net/npm/bootstrap@5.3.0/dist/js/bootstrap.bundle.min.js"></script>
</body>
</html>
